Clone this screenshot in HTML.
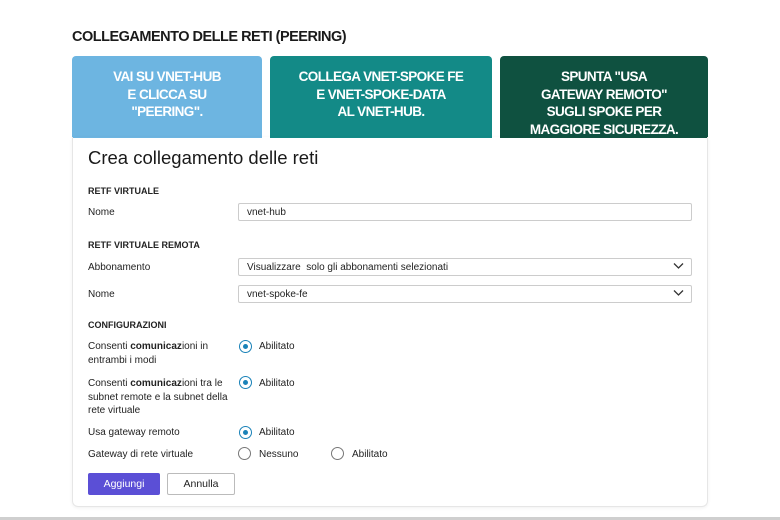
<!DOCTYPE html><html><head><style>
body{margin:0;width:780px;height:520px;background:#fff;font-family:"Liberation Sans",sans-serif;position:relative;overflow:hidden;color:#222}
.a{position:absolute}
.t{left:72px;top:29px;font-size:14.5px;font-weight:bold;color:#1a1a1a;letter-spacing:-0.5px}
.box{top:56px;height:82px;color:#fff;font-weight:bold;font-size:13.5px;line-height:17.5px;text-align:center;border-radius:4px 4px 0 0;box-sizing:border-box;padding-top:12px;letter-spacing:-0.6px}
.card{left:72px;top:137px;width:636px;height:370px;border:1px solid #e6e6e6;border-top:none;border-radius:0 0 6px 6px;box-sizing:border-box;box-shadow:0 1px 3px rgba(0,0,0,.06)}
.s{font-size:9px;font-weight:bold;color:#222}
.l{font-size:10px;color:#222;line-height:13.5px}
.in{left:238px;width:454px;height:18px;border:1px solid #ccc;border-radius:2px;box-sizing:border-box;font-size:10px;padding:3px 8px;color:#222}
.chev{position:absolute;right:7px;top:3px}
.r{width:13px;height:13px;border:1.3px solid #777;border-radius:50%;box-sizing:border-box}
.r.on{border-color:#1a82b8;border-width:1.5px}
.r.on::after{content:"";position:absolute;left:2.5px;top:2.5px;width:5px;height:5px;border-radius:50%;background:#1a82b8}
</style></head><body>
<div class="a t">COLLEGAMENTO DELLE RETI (PEERING)</div>
<div class="a box" style="left:72px;width:190px;background:#6db5e1">VAI SU VNET-HUB<br>E CLICCA SU<br>"PEERING".</div>
<div class="a box" style="left:270px;width:222px;background:#138a87">COLLEGA VNET-SPOKE FE<br>E VNET-SPOKE-DATA<br>AL VNET-HUB.</div>
<div class="a box" style="left:500px;width:208px;background:#0f5140">SPUNTA "USA<br>GATEWAY REMOTO"<br>SUGLI SPOKE PER<br>MAGGIORE SICUREZZA.</div>
<div class="a card"></div>
<div class="a" style="left:88px;top:147px;font-size:18.5px;color:#1a1a1a">Crea collegamento delle reti</div>
<div class="a s" style="left:88px;top:186px">RETF VIRTUALE</div>
<div class="a l" style="left:88px;top:206px">Nome</div>
<div class="a in" style="top:203px">vnet-hub</div>
<div class="a s" style="left:88px;top:240px">RETF VIRTUALE REMOTA</div>
<div class="a l" style="left:88px;top:261px">Abbonamento</div>
<div class="a in" style="top:258px">Visualizzare&nbsp; solo gli abbonamenti selezionati<svg class="chev" width="11" height="8" viewBox="0 0 11 8"><path d="M1 1.5L5.5 6L10 1.5" fill="none" stroke="#333" stroke-width="1.3"/></svg></div>
<div class="a l" style="left:88px;top:288px">Nome</div>
<div class="a in" style="top:285px">vnet-spoke-fe<svg class="chev" width="11" height="8" viewBox="0 0 11 8"><path d="M1 1.5L5.5 6L10 1.5" fill="none" stroke="#333" stroke-width="1.3"/></svg></div>
<div class="a s" style="left:88px;top:320px">CONFIGURAZIONI</div>
<div class="a l" style="left:88px;top:340px">Consenti <b style="font-weight:600">comunicaz</b>ioni in<br>entrambi i modi</div>
<div class="a r on" style="left:239px;top:340px"></div><div class="a l" style="left:259px;top:340px">Abilitato</div>
<div class="a l" style="left:88px;top:377px">Consenti <b style="font-weight:600">comunicaz</b>ioni tra le<br>subnet remote e la subnet della<br>rete virtuale</div>
<div class="a r on" style="left:239px;top:376px"></div><div class="a l" style="left:259px;top:377px">Abilitato</div>
<div class="a l" style="left:88px;top:426px">Usa gateway remoto</div>
<div class="a r on" style="left:239px;top:426px"></div><div class="a l" style="left:259px;top:426px">Abilitato</div>
<div class="a l" style="left:88px;top:448px">Gateway di rete virtuale</div>
<div class="a r" style="left:238px;top:447px"></div><div class="a l" style="left:259px;top:448px">Nessuno</div>
<div class="a r" style="left:331px;top:447px"></div><div class="a l" style="left:352px;top:448px">Abilitato</div>
<div class="a" style="left:88px;top:473px;width:72px;height:22px;background:#5b4fd6;border-radius:2px;color:#fff;font-size:10.5px;text-align:center;line-height:22px">Aggiungi</div>
<div class="a" style="left:167px;top:473px;width:68px;height:22px;border:1px solid #bbb;box-sizing:border-box;border-radius:2px;font-size:10.5px;text-align:center;line-height:20px">Annulla</div>
<div class="a" style="left:0;top:517px;width:780px;height:3px;background:#cfcfcf"></div>
</body></html>
